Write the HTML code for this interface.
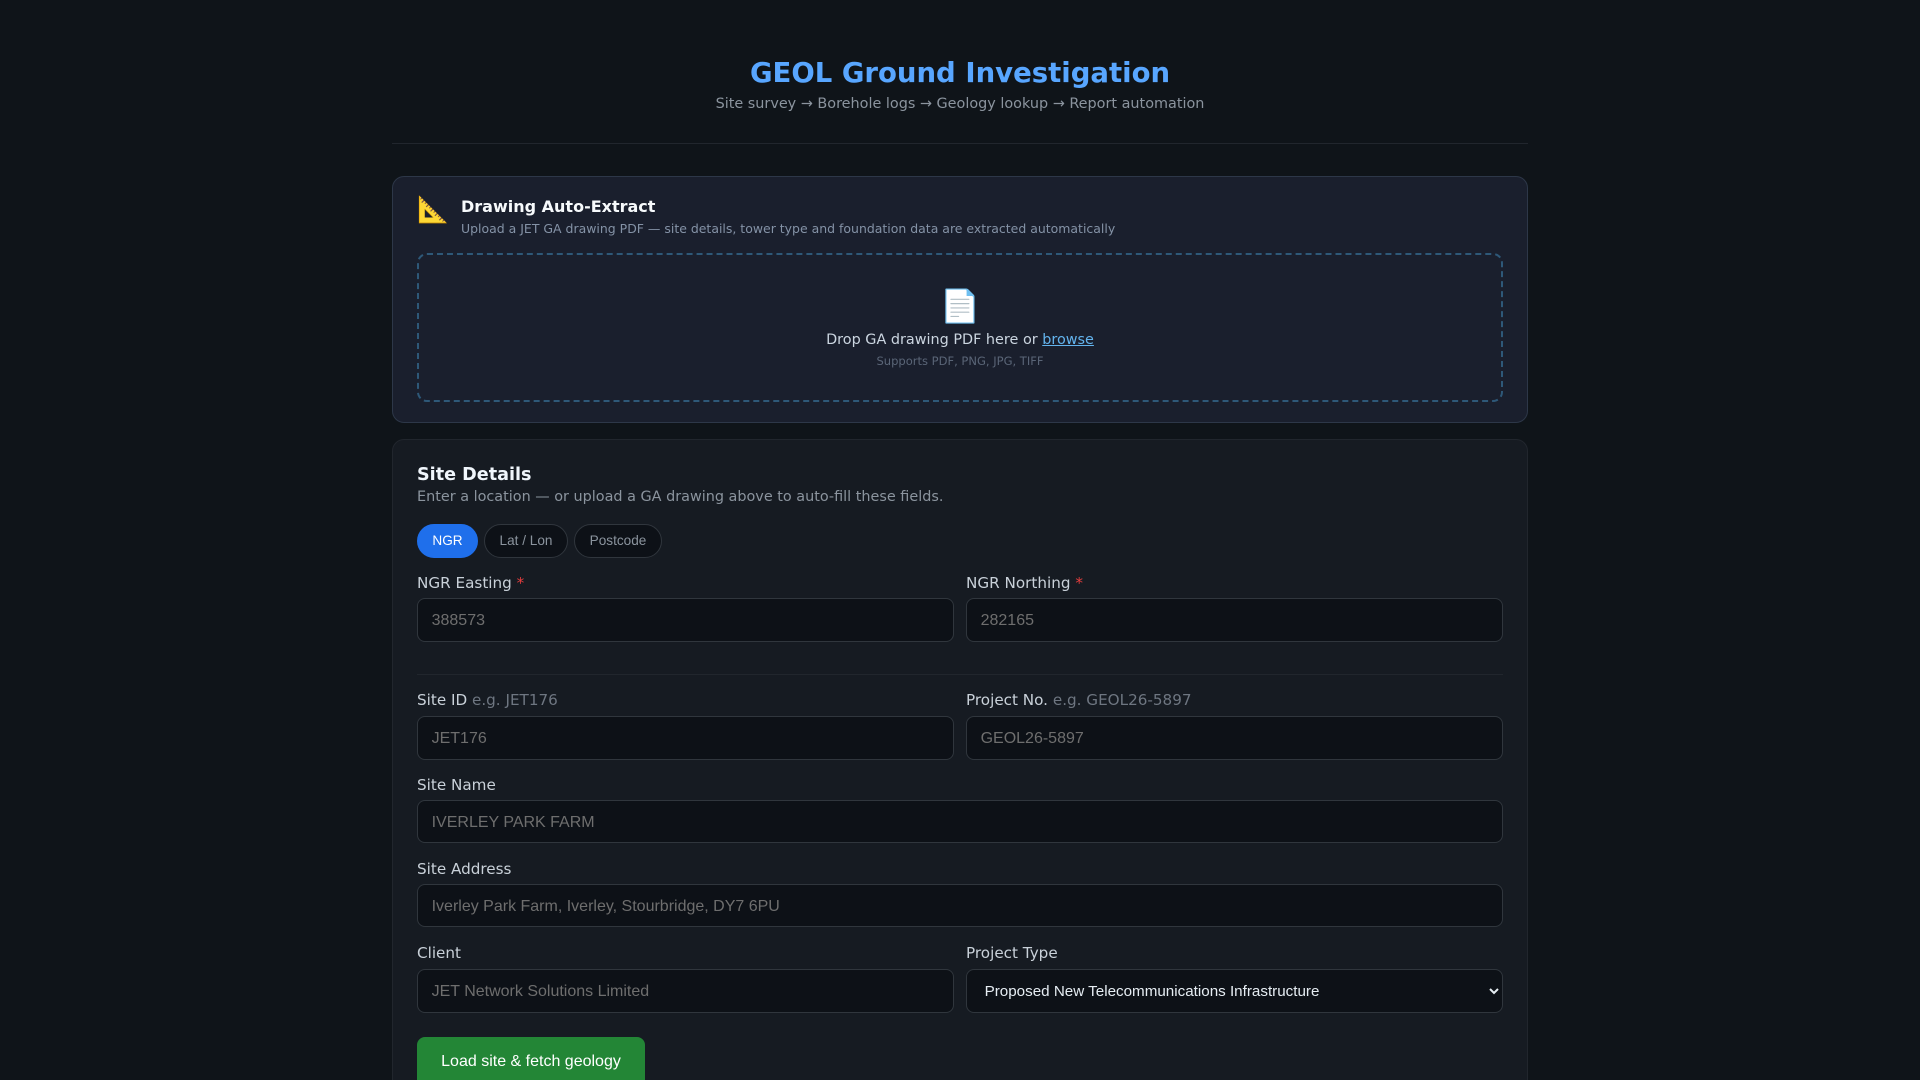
<!DOCTYPE html>
<html lang="en"><head><meta charset="utf-8"><title>GEOL Ground Investigation</title>
<style>
*{box-sizing:border-box}
html,body{margin:0;padding:0;width:1920px;height:1080px;overflow:hidden;background:#0f1419;font-family:"DejaVu Sans",sans-serif;color:#e6edf3}
#w{position:relative;width:1920px;height:1080px;overflow:hidden}
.a{position:absolute;white-space:nowrap}
.l{position:absolute;white-space:nowrap;font-size:15.2px;line-height:20px;color:#c9d1d9}
.l i{font-style:normal;color:#6e7681}
.l b{font-weight:400;color:#e53e3e}
input,select{position:absolute;height:44px;background:#0d1117;border:1px solid #30363d;border-radius:8px;font:16px "Liberation Sans",sans-serif;color:#e6edf3;padding:2px 13.6px 0;outline:0;margin:0}
input::placeholder{color:#6e6e6e;opacity:1}
select{font-size:15.2px;padding:0 13.6px}
.p{position:absolute;top:524px;height:34px;border-radius:17px;border:1px solid #30363d;background:#0d1117;color:#8b949e;font:13.6px "Liberation Sans",sans-serif;padding:0 0 2px;text-align:center}
</style></head><body><div id="w">
<div class="a" style="left:0;width:1920px;top:55px;text-align:center;font-size:27.52px;line-height:36px;font-weight:700;color:#58a6ff">GEOL Ground Investigation</div>
<div class="a" style="left:0;width:1920px;top:94px;text-align:center;font-size:14.4px;line-height:20px;color:#8b949e">Site survey → Borehole logs → Geology lookup → Report automation</div>
<div class="a" style="left:392px;top:143px;width:1136px;height:1px;background:#21262d"></div>

<div class="a" style="left:392px;top:176px;width:1136px;height:247px;background:#1a1f2d;border:1px solid #2d3748;border-radius:12px"></div>
<div class="a" style="left:417px;top:192px;font-size:25.6px;line-height:36px;font-family:'Noto Color Emoji',sans-serif">📐</div>
<div class="a" style="left:461px;top:197px;font-size:16px;line-height:20px;font-weight:700;color:#f7fafc">Drawing Auto-Extract</div>
<div class="a" style="left:461px;top:220px;font-size:12.48px;line-height:18px;color:#8492a6">Upload a JET GA drawing PDF — site details, tower type and foundation data are extracted automatically</div>
<div class="a" style="left:417px;top:253px;width:1086px;height:149px;border:2px dashed #2e5878;border-radius:10px"></div>
<div class="a" style="left:0;width:1920px;top:286px;text-align:center;font-size:32px;line-height:40px;font-family:'Noto Color Emoji',sans-serif">📄</div>
<div class="a" style="left:0;width:1920px;top:330px;text-align:center;font-size:14.4px;line-height:20px;color:#cbd5e0">Drop GA drawing PDF here or <span style="color:#63b3ed;text-decoration:underline">browse</span></div>
<div class="a" style="left:0;width:1920px;top:352px;text-align:center;font-size:11.52px;line-height:18px;color:#5a6577">Supports PDF, PNG, JPG, TIFF</div>

<div class="a" style="left:392px;top:439px;width:1136px;height:700px;background:#161b22;border:1px solid #21262d;border-radius:12px"></div>
<div class="a" style="left:417px;top:464px;font-size:17.6px;line-height:23px;font-weight:700;color:#f0f6fc">Site Details</div>
<div class="a" style="left:417px;top:487px;font-size:14.4px;line-height:20px;color:#8b949e">Enter a location — or upload a GA drawing above to auto-fill these fields.</div>
<button class="p" style="left:417px;width:61px;background:#1f6feb;border-color:#1f6feb;color:#fff">NGR</button>
<button class="p" style="left:484px;width:84px">Lat / Lon</button>
<button class="p" style="left:574px;width:88px">Postcode</button>

<div class="l" style="left:417px;top:573px">NGR Easting <b>*</b></div>
<div class="l" style="left:966px;top:573px">NGR Northing <b>*</b></div>
<input style="left:417px;top:598px;width:537px" placeholder="388573">
<input style="left:966px;top:598px;width:537px" placeholder="282165">
<div class="a" style="left:417px;top:674px;width:1086px;height:1px;background:#21262d"></div>
<div class="l" style="left:417px;top:690px">Site ID <i>e.g. JET176</i></div>
<div class="l" style="left:966px;top:690px">Project No. <i>e.g. GEOL26-5897</i></div>
<input style="left:417px;top:716px;width:537px" placeholder="JET176">
<input style="left:966px;top:716px;width:537px" placeholder="GEOL26-5897">
<div class="l" style="left:417px;top:775px">Site Name</div>
<input style="left:417px;top:800px;width:1086px;height:43px" placeholder="IVERLEY PARK FARM">
<div class="l" style="left:417px;top:859px">Site Address</div>
<input style="left:417px;top:884px;width:1086px;height:43px" placeholder="Iverley Park Farm, Iverley, Stourbridge, DY7 6PU">
<div class="l" style="left:417px;top:943px">Client</div>
<div class="l" style="left:966px;top:943px">Project Type</div>
<input style="left:417px;top:969px;width:537px;height:44px" placeholder="JET Network Solutions Limited">
<select style="left:966px;top:969px;width:537px"><option>Proposed New Telecommunications Infrastructure</option></select>
<button class="a" style="left:417px;top:1037px;width:228px;height:43px;background:#238636;border:0;border-radius:8px 8px 0 0;color:#fff;font:16px 'Liberation Sans',sans-serif;padding:7px 0 0">Load site &amp; fetch geology</button>
</div></body></html>
